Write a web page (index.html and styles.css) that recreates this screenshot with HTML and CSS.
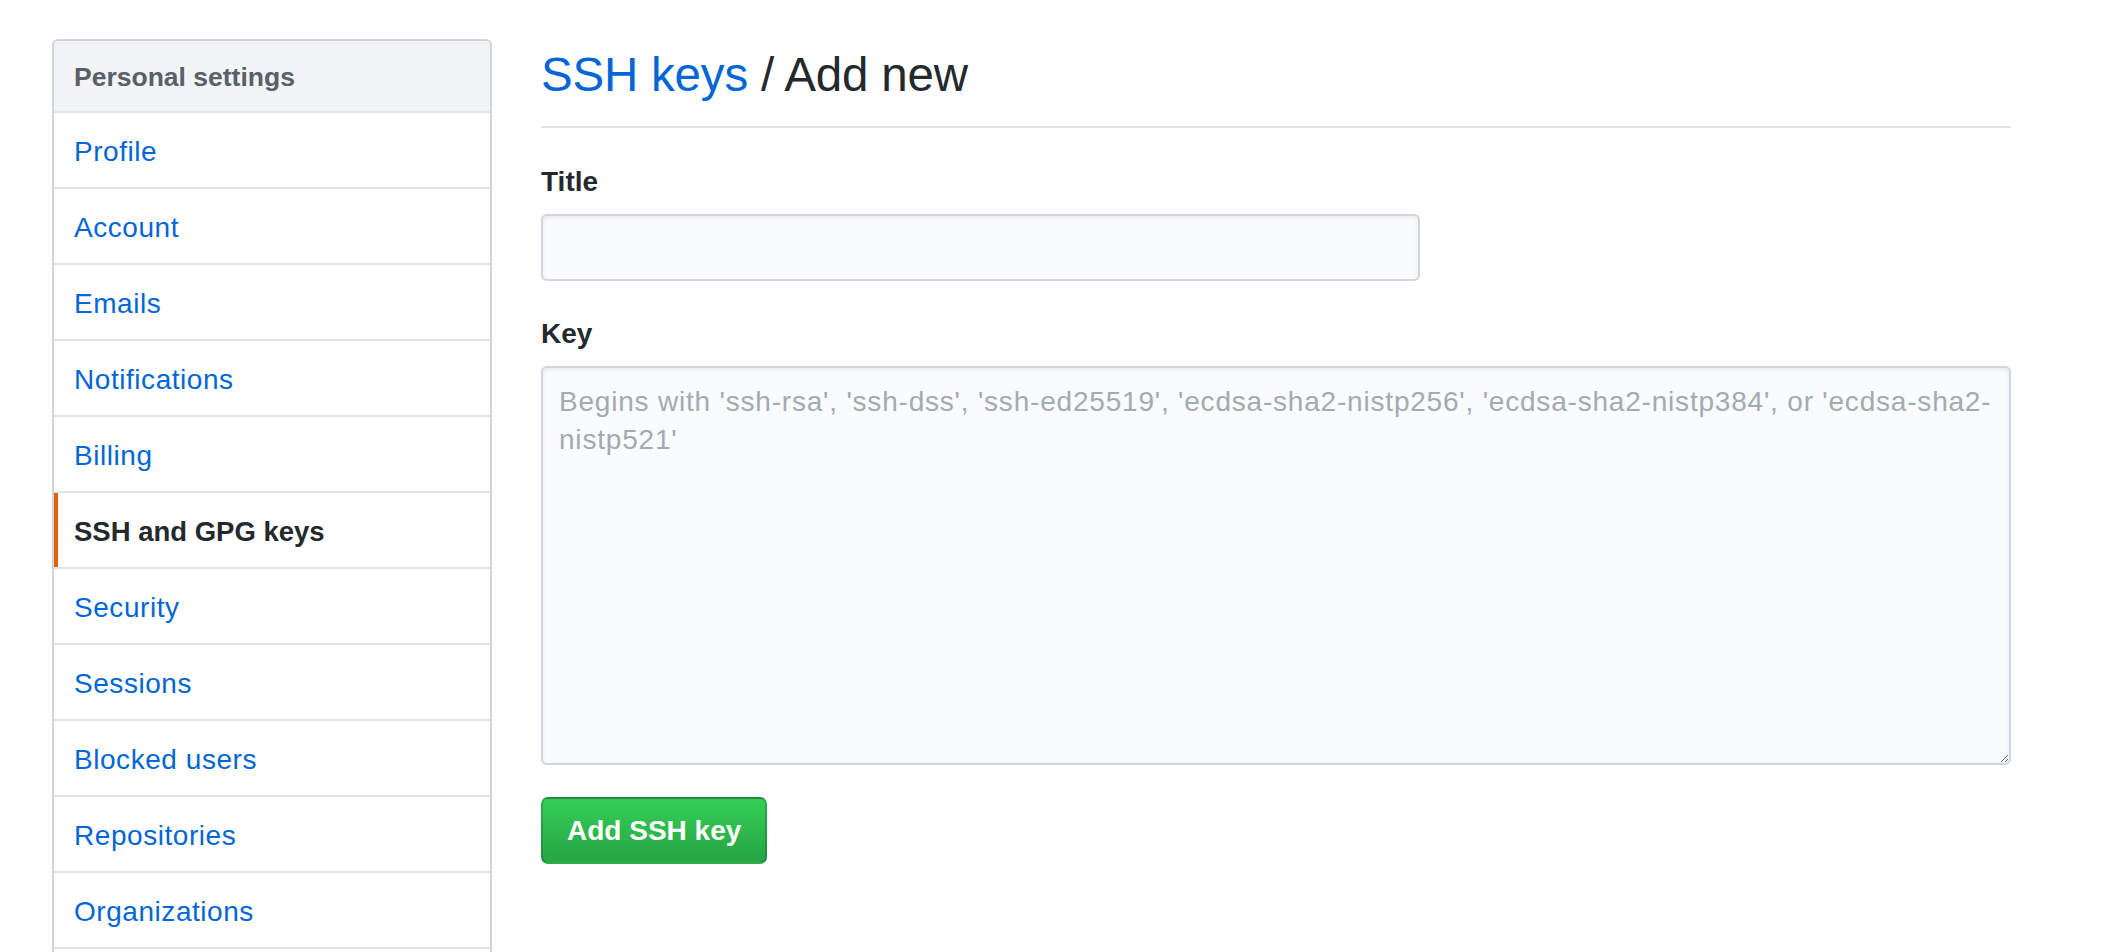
FILE: index.html
```html
<!DOCTYPE html>
<html lang="en">
<head>
<meta charset="utf-8">
<title>SSH keys / Add new</title>
<link rel="stylesheet" href="styles.css">
</head>
<body>
<div class="page">
  <nav class="menu">
    <div class="menu-heading">Personal settings</div>
    <a class="menu-item" href="#">Profile</a>
    <a class="menu-item" href="#">Account</a>
    <a class="menu-item" href="#">Emails</a>
    <a class="menu-item" href="#">Notifications</a>
    <a class="menu-item" href="#">Billing</a>
    <a class="menu-item selected" href="#">SSH and GPG keys</a>
    <a class="menu-item" href="#">Security</a>
    <a class="menu-item" href="#">Sessions</a>
    <a class="menu-item" href="#">Blocked users</a>
    <a class="menu-item" href="#">Repositories</a>
    <a class="menu-item" href="#">Organizations</a>
  </nav>
  <main class="content">
    <h2 class="subhead"><a href="#">SSH keys</a> / Add new</h2>
    <form class="form">
      <label class="label" for="title">Title</label>
      <input class="input" id="title" type="text">
      <label class="label" for="key">Key</label>
      <textarea class="textarea" id="key" placeholder="Begins with 'ssh-rsa', 'ssh-dss', 'ssh-ed25519', 'ecdsa-sha2-nistp256', 'ecdsa-sha2-nistp384', or 'ecdsa-sha2-nistp521'"></textarea>
      <div class="actions"><button class="btn" type="button">Add SSH key</button></div>
    </form>
  </main>
</div>
</body>
</html>
```

FILE: styles.css
```css
html, body {
  margin: 0;
  padding: 0;
  height: 100%;
  overflow: hidden;
  background: #ffffff;
}
body {
  font-family: "Liberation Sans", Arial, sans-serif;
  font-size: 28px;
  color: #24292e;
}
.page {
  display: flex;
  align-items: flex-start;
  gap: 49px;
  padding: 39px 0 0 52px;
}
.menu {
  width: 440px;
  flex: 0 0 440px;
  box-sizing: border-box;
  border: 2px solid #d1d5da;
  border-radius: 6px;
  display: flex;
  flex-direction: column;
  overflow: hidden;
  padding-bottom: 80px;
}
.menu-heading {
  box-sizing: border-box;
  height: 72px;
  display: flex;
  align-items: center;
  padding: 3px 20px 0;
  background: #f3f4f6;
  border-bottom: 2px solid #e1e4e8;
  color: #586069;
  font-weight: bold;
  font-size: 26.5px;
}
.menu-item {
  box-sizing: border-box;
  height: 76px;
  display: flex;
  align-items: center;
  padding: 4px 20px 0;
  border-bottom: 2px solid #e1e4e8;
  color: #0366d6;
  text-decoration: none;
  letter-spacing: 0.55px;
  position: relative;
}
.menu-item.selected {
  color: #24292e;
  font-weight: bold;
  font-size: 27.5px;
  letter-spacing: 0;
  cursor: default;
}
.menu-item.selected::before {
  content: "";
  position: absolute;
  left: 0;
  top: 0;
  bottom: 0;
  width: 4px;
  background: #e36209;
}
.content {
  width: 1470px;
  flex: 0 0 1470px;
}
.subhead {
  margin: 0;
  font-size: 47.5px;
  font-weight: normal;
  line-height: 72px;
  padding-bottom: 15px;
  border-bottom: 2px solid #e1e4e8;
  color: #24292e;
  letter-spacing: -0.2px;
}
.subhead a {
  color: #0366d6;
  text-decoration: none;
}
.form {
  display: flex;
  flex-direction: column;
  align-items: flex-start;
  padding-top: 34px;
}
.label {
  font-weight: bold;
  line-height: 40px;
  margin-bottom: 12px;
}
.input, .textarea {
  box-sizing: border-box;
  font-family: "Liberation Sans", Arial, sans-serif;
  font-size: 28px;
  color: #24292e;
  background: #fafbfc;
  border: 2px solid #d1d5da;
  border-radius: 6px;
  box-shadow: inset 0 2px 4px rgba(27, 31, 35, 0.075);
  outline: none;
}
.input {
  width: 879px;
  height: 67px;
  padding: 0 16px;
  margin-bottom: 33px;
}
.textarea {
  width: 1470px;
  height: 399px;
  padding: 15px 10px 15px 16px;
  line-height: 38px;
  letter-spacing: 0.8px;
  resize: vertical;
  margin-bottom: 32px;
}
.textarea::placeholder {
  color: #a3aab1;
}
.btn {
  box-sizing: border-box;
  height: 67px;
  padding: 0 24px;
  font-family: "Liberation Sans", Arial, sans-serif;
  font-size: 28px;
  font-weight: bold;
  color: #ffffff;
  background: linear-gradient(-180deg, #34d058 0%, #28a745 90%);
  border: 2px solid rgba(27, 31, 35, 0.2);
  border-radius: 7px;
  cursor: pointer;
}
```
